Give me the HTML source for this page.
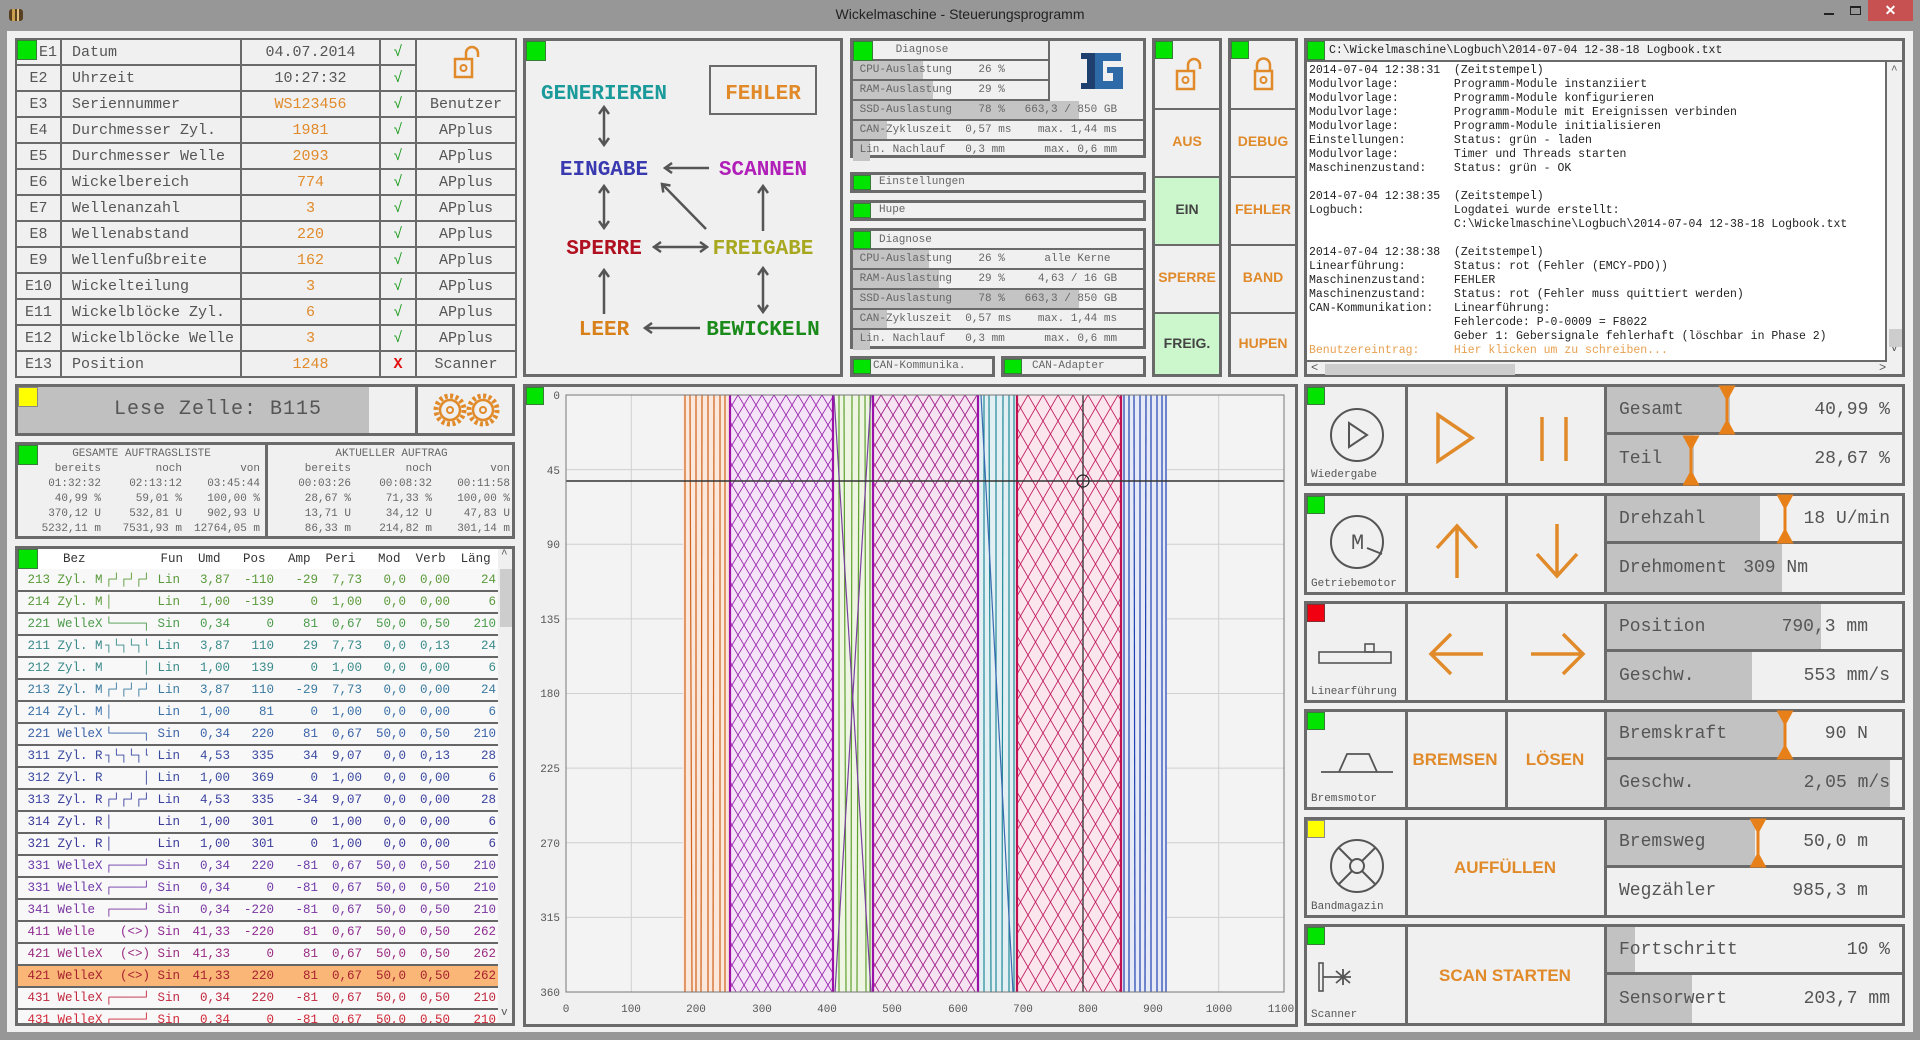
<!DOCTYPE html>
<html><head><meta charset="utf-8"><style>
*{box-sizing:border-box}
body{margin:0;width:1920px;height:1040px;overflow:hidden;background:#979797;font-family:"Liberation Mono",monospace;color:#555}
.a{position:absolute}
#win{position:absolute;left:7px;top:31px;width:1906px;height:1001px;background:#f0f0f0}
.bx{position:absolute;border:3px solid #6a6a6a}
.g{position:absolute;width:20px;height:20px;background:#00e400;border:1px solid #3a7a3a}
table{border-collapse:collapse;table-layout:fixed}
#et td{border:2px solid #6a6a6a;height:26px;padding:0;font-size:15px;white-space:nowrap;overflow:hidden}
.or{color:#e08a2a}
.btn{font-family:"Liberation Sans",sans-serif;font-weight:bold;color:#e08a2a;text-align:center}
.dg{position:absolute;left:0;height:20px;border-bottom:2px solid #6a6a6a;font-size:11px;line-height:18px;white-space:pre;color:#666;overflow:hidden}
.dg i{position:absolute;left:0;top:0;bottom:0;background:#c4c4c4}
.dg span{position:relative}
#log div{height:14px;line-height:14px;white-space:pre;font-size:11.5px;color:#222}
#lst td{font-size:12.5px;height:22px;border-bottom:2px solid #666;padding:0 2px;white-space:pre;text-align:right;overflow:hidden}
#lst td.l{text-align:left}
.rp{position:absolute;left:1304px;width:601px;border:3px solid #6a6a6a;background:#f0f0f0}
.rc{position:absolute;top:0;bottom:0;border-right:3px solid #6a6a6a}
.rv{position:absolute;left:300px;right:0;height:50%;font-size:18px;color:#555;overflow:hidden}
.rv i{position:absolute;left:0;top:0;bottom:0;background:#c2c2c2}
.rv b{position:absolute;left:12px;font-weight:normal;top:50%;transform:translateY(-50%)}
.rv u{position:absolute;text-decoration:none;top:50%;transform:translateY(-50%)}
.lab{position:absolute;left:4px;bottom:2px;font-size:11px;color:#555}
.ck{text-align:center;color:#1a9a1a}
</style></head><body>
<svg class="a" style="left:6px;top:6px" width="20" height="18"><rect x="3" y="3" width="14" height="12" rx="3" fill="#5a4020"/><rect x="6" y="3" width="3" height="12" fill="#c8a050"/><rect x="11" y="3" width="2" height="12" fill="#e0c080"/></svg>
<div class="a" style="left:0;width:1920px;top:6px;text-align:center;font-family:'Liberation Sans',sans-serif;font-size:14px;color:#222">Wickelmaschine - Steuerungsprogramm</div>
<div class="a" style="left:1824px;top:13px;width:10px;height:2px;background:#222"></div>
<div class="a" style="left:1850px;top:6px;width:11px;height:9px;border:1px solid #222;border-top-width:2px"></div>
<div class="a" style="left:1868px;top:0;width:45px;height:21px;background:#c75050;color:#fff;text-align:center;font:bold 14px 'Liberation Sans',sans-serif;line-height:21px">✕</div>
<div id="win"></div>

<table id="et" class="a" style="left:15px;top:38px;width:500px">
<colgroup><col style="width:45px"><col style="width:180px"><col style="width:139px"><col style="width:36px"><col style="width:100px"></colgroup>
<tr><td style="text-align:right;padding-right:3px;position:relative"><div class="g" style="left:0;top:0"></div>E1</td><td style="padding-left:10px">Datum</td><td style="text-align:center">04.07.2014</td><td class="ck">√</td><td rowspan="2" style="text-align:center"><svg width="30" height="40" viewBox="0 0 30 40"><path d="M15 16 V10 a6 6 0 0 1 12 0 v4" fill="none" stroke="#e08a2a" stroke-width="2.5"/><rect x="4" y="16" width="17" height="18" fill="none" stroke="#e08a2a" stroke-width="2.5"/><circle cx="12.5" cy="25" r="3" fill="none" stroke="#e08a2a" stroke-width="2"/></svg></td></tr>
<tr><td style="text-align:center">E2</td><td style="padding-left:10px">Uhrzeit</td><td style="text-align:center">10:27:32</td><td class="ck">√</td></tr>
<tr><td style="text-align:center">E3</td><td style="padding-left:10px">Seriennummer</td><td style="text-align:center" class="or">WS123456</td><td class="ck">√</td><td style="text-align:center">Benutzer</td></tr>
<tr><td style="text-align:center">E4</td><td style="padding-left:10px">Durchmesser Zyl.</td><td style="text-align:center" class="or">1981</td><td class="ck">√</td><td style="text-align:center">APplus</td></tr>
<tr><td style="text-align:center">E5</td><td style="padding-left:10px">Durchmesser Welle</td><td style="text-align:center" class="or">2093</td><td class="ck">√</td><td style="text-align:center">APplus</td></tr>
<tr><td style="text-align:center">E6</td><td style="padding-left:10px">Wickelbereich</td><td style="text-align:center" class="or">774</td><td class="ck">√</td><td style="text-align:center">APplus</td></tr>
<tr><td style="text-align:center">E7</td><td style="padding-left:10px">Wellenanzahl</td><td style="text-align:center" class="or">3</td><td class="ck">√</td><td style="text-align:center">APplus</td></tr>
<tr><td style="text-align:center">E8</td><td style="padding-left:10px">Wellenabstand</td><td style="text-align:center" class="or">220</td><td class="ck">√</td><td style="text-align:center">APplus</td></tr>
<tr><td style="text-align:center">E9</td><td style="padding-left:10px">Wellenfußbreite</td><td style="text-align:center" class="or">162</td><td class="ck">√</td><td style="text-align:center">APplus</td></tr>
<tr><td style="text-align:center">E10</td><td style="padding-left:10px">Wickelteilung</td><td style="text-align:center" class="or">3</td><td class="ck">√</td><td style="text-align:center">APplus</td></tr>
<tr><td style="text-align:center">E11</td><td style="padding-left:10px">Wickelblöcke Zyl.</td><td style="text-align:center" class="or">6</td><td class="ck">√</td><td style="text-align:center">APplus</td></tr>
<tr><td style="text-align:center">E12</td><td style="padding-left:10px">Wickelblöcke Welle</td><td style="text-align:center" class="or">3</td><td class="ck">√</td><td style="text-align:center">APplus</td></tr>
<tr><td style="text-align:center">E13</td><td style="padding-left:10px">Position</td><td style="text-align:center" class="or">1248</td><td style="text-align:center;color:#e01010;font-weight:bold">X</td><td style="text-align:center">Scanner</td></tr>
</table>

<div class="bx" style="left:15px;top:384px;width:500px;height:52px">
 <div class="a" style="left:0;top:0;width:351px;height:46px;background:#c0c0c0"></div>
 <div class="a" style="left:0;top:0;width:20px;height:20px;background:#ffff00;border:1px solid #888"></div>
 <div class="a" style="left:0;width:400px;top:11px;text-align:center;font-size:20px;letter-spacing:1px;color:#555">Lese Zelle: B115</div>
 <div class="a" style="left:397px;top:0;width:3px;height:46px;background:#6a6a6a"></div>
 <svg class="a" style="left:412px;top:3px" width="80" height="40"><g fill="none" stroke="#e08a2a"><circle cx="20" cy="20" r="14" stroke-width="5" stroke-dasharray="3 2.5"/><circle cx="20" cy="20" r="10" stroke-width="2.5"/><circle cx="20" cy="20" r="3" stroke-width="2"/><circle cx="53" cy="20" r="14" stroke-width="5" stroke-dasharray="3 2.5"/><circle cx="53" cy="20" r="10" stroke-width="2.5"/><circle cx="53" cy="20" r="3" stroke-width="2"/></g></svg>
</div>

<div class="bx" style="left:15px;top:442px;width:500px;height:97px;font-size:11px;color:#666;line-height:15px">
 <div class="g" style="left:0;top:0"></div>
 <div class="a" style="left:247px;top:0;width:3px;height:91px;background:#6a6a6a"></div>
 <div class="a" style="left:0;top:2px;width:247px;text-align:center">GESAMTE AUFTRAGSLISTE</div>
 <div class="a" style="left:250px;top:2px;width:247px;text-align:center">AKTUELLER AUFTRAG</div>
 <div class="a" style="left:8px;top:17px;width:75px;text-align:right;white-space:pre">bereits
01:32:32
40,99 %
370,12 U
5232,11 m</div>
 <div class="a" style="left:86px;top:17px;width:78px;text-align:right;white-space:pre">noch
02:13:12
59,01 %
532,81 U
7531,93 m</div>
 <div class="a" style="left:166px;top:17px;width:76px;text-align:right;white-space:pre">von
03:45:44
100,00 %
902,93 U
12764,05 m</div>
 <div class="a" style="left:258px;top:17px;width:75px;text-align:right;white-space:pre">bereits
00:03:26
28,67 %
13,71 U
86,33 m</div>
 <div class="a" style="left:336px;top:17px;width:78px;text-align:right;white-space:pre">noch
00:08:32
71,33 %
34,12 U
214,82 m</div>
 <div class="a" style="left:416px;top:17px;width:76px;text-align:right;white-space:pre">von
00:11:58
100,00 %
47,83 U
301,14 m</div>
</div>

<div class="bx" style="left:15px;top:546px;width:500px;height:480px;overflow:hidden;background:#f8f8f8">
 <div class="a" style="left:0;top:0;width:480px;height:20px;background:#fff;font-size:12.5px;color:#333;line-height:20px;white-space:pre">      Bez          Fun  Umd   Pos   Amp  Peri   Mod  Verb  Läng</div>
 <div class="g" style="left:0;top:0"></div>
 <div class="a" style="left:480px;top:0;width:17px;height:474px;background:#f0f0f0"></div>
 <div class="a" style="left:483px;top:0;font-size:11px;color:#555">^</div>
 <div class="a" style="left:483px;top:458px;font-size:11px;color:#555">v</div>
 <div class="a" style="left:482px;top:20px;width:13px;height:58px;background:#cdcdcd"></div>
 <table id="lst" class="a" style="left:0;top:20px;width:480px">
 <colgroup><col style="width:85px"><col style="width:45px"><col style="width:42px"><col style="width:42px"><col style="width:44px"><col style="width:44px"><col style="width:44px"><col style="width:44px"><col style="width:44px"><col style="width:46px"></colgroup>
 <tr style="color:#5a9a3a"><td class="l"> 213 Zyl. M</td><td class="l">┌┘┌┘┌┘</td><td class="l"> Lin</td><td>3,87</td><td>-110</td><td>-29</td><td>7,73</td><td>0,0</td><td>0,00</td><td>24</td></tr>
 <tr style="color:#5a9a3a"><td class="l"> 214 Zyl. M</td><td class="l">│</td><td class="l"> Lin</td><td>1,00</td><td>-139</td><td>0</td><td>1,00</td><td>0,0</td><td>0,00</td><td>6</td></tr>
 <tr style="color:#4a9a4a"><td class="l"> 221 WelleX</td><td class="l">└────┐</td><td class="l"> Sin</td><td>0,34</td><td>0</td><td>81</td><td>0,67</td><td>50,0</td><td>0,50</td><td>210</td></tr>
 <tr style="color:#3a8a8a"><td class="l"> 211 Zyl. M</td><td class="l">┐└┐└┐└</td><td class="l"> Lin</td><td>3,87</td><td>110</td><td>29</td><td>7,73</td><td>0,0</td><td>0,13</td><td>24</td></tr>
 <tr style="color:#3a8a8a"><td class="l"> 212 Zyl. M</td><td class="l">     │</td><td class="l"> Lin</td><td>1,00</td><td>139</td><td>0</td><td>1,00</td><td>0,0</td><td>0,00</td><td>6</td></tr>
 <tr style="color:#3a7aa0"><td class="l"> 213 Zyl. M</td><td class="l">┌┘┌┘┌┘</td><td class="l"> Lin</td><td>3,87</td><td>110</td><td>-29</td><td>7,73</td><td>0,0</td><td>0,00</td><td>24</td></tr>
 <tr style="color:#3a70a8"><td class="l"> 214 Zyl. M</td><td class="l">│</td><td class="l"> Lin</td><td>1,00</td><td>81</td><td>0</td><td>1,00</td><td>0,0</td><td>0,00</td><td>6</td></tr>
 <tr style="color:#3a62a8"><td class="l"> 221 WelleX</td><td class="l">└────┐</td><td class="l"> Sin</td><td>0,34</td><td>220</td><td>81</td><td>0,67</td><td>50,0</td><td>0,50</td><td>210</td></tr>
 <tr style="color:#3a4aa0"><td class="l"> 311 Zyl. R</td><td class="l">┐└┐└┐└</td><td class="l"> Lin</td><td>4,53</td><td>335</td><td>34</td><td>9,07</td><td>0,0</td><td>0,13</td><td>28</td></tr>
 <tr style="color:#3a4aa0"><td class="l"> 312 Zyl. R</td><td class="l">     │</td><td class="l"> Lin</td><td>1,00</td><td>369</td><td>0</td><td>1,00</td><td>0,0</td><td>0,00</td><td>6</td></tr>
 <tr style="color:#3a40a0"><td class="l"> 313 Zyl. R</td><td class="l">┌┘┌┘┌┘</td><td class="l"> Lin</td><td>4,53</td><td>335</td><td>-34</td><td>9,07</td><td>0,0</td><td>0,00</td><td>28</td></tr>
 <tr style="color:#3a3a9a"><td class="l"> 314 Zyl. R</td><td class="l">│</td><td class="l"> Lin</td><td>1,00</td><td>301</td><td>0</td><td>1,00</td><td>0,0</td><td>0,00</td><td>6</td></tr>
 <tr style="color:#3a3a9a"><td class="l"> 321 Zyl. R</td><td class="l">│</td><td class="l"> Lin</td><td>1,00</td><td>301</td><td>0</td><td>1,00</td><td>0,0</td><td>0,00</td><td>6</td></tr>
 <tr style="color:#6a3aa8"><td class="l"> 331 WelleX</td><td class="l">┌────┘</td><td class="l"> Sin</td><td>0,34</td><td>220</td><td>-81</td><td>0,67</td><td>50,0</td><td>0,50</td><td>210</td></tr>
 <tr style="color:#7038a8"><td class="l"> 331 WelleX</td><td class="l">┌────┘</td><td class="l"> Sin</td><td>0,34</td><td>0</td><td>-81</td><td>0,67</td><td>50,0</td><td>0,50</td><td>210</td></tr>
 <tr style="color:#7a35a0"><td class="l"> 341 Welle</td><td class="l">┌────┘</td><td class="l"> Sin</td><td>0,34</td><td>-220</td><td>-81</td><td>0,67</td><td>50,0</td><td>0,50</td><td>210</td></tr>
 <tr style="color:#902a90"><td class="l"> 411 Welle</td><td class="l">  (&lt;&gt;)</td><td class="l"> Sin</td><td>41,33</td><td>-220</td><td>81</td><td>0,67</td><td>50,0</td><td>0,50</td><td>262</td></tr>
 <tr style="color:#9a2a80"><td class="l"> 421 WelleX</td><td class="l">  (&lt;&gt;)</td><td class="l"> Sin</td><td>41,33</td><td>0</td><td>81</td><td>0,67</td><td>50,0</td><td>0,50</td><td>262</td></tr>
 <tr style="color:#a82030;background:#f9b676"><td class="l"> 421 WelleX</td><td class="l">  (&lt;&gt;)</td><td class="l"> Sin</td><td>41,33</td><td>220</td><td>81</td><td>0,67</td><td>50,0</td><td>0,50</td><td>262</td></tr>
 <tr style="color:#c02840"><td class="l"> 431 WelleX</td><td class="l">┌────┘</td><td class="l"> Sin</td><td>0,34</td><td>220</td><td>-81</td><td>0,67</td><td>50,0</td><td>0,50</td><td>210</td></tr>
 <tr style="color:#d02838"><td class="l"> 431 WelleX</td><td class="l">┌────┘</td><td class="l"> Sin</td><td>0,34</td><td>0</td><td>-81</td><td>0,67</td><td>50,0</td><td>0,50</td><td>210</td></tr>
 </table>
</div>

<div class="bx" style="left:523px;top:38px;width:320px;height:339px">
 <div class="g" style="left:0;top:0"></div>
 <div class="a" style="left:183px;top:24px;width:108px;height:50px;border:2px solid #6a6a6a"></div>
 <svg class="a" style="left:0;top:0" width="314" height="333">
 <defs><marker id="ar" markerWidth="10" markerHeight="12" refX="8" refY="6" orient="auto-start-reverse" markerUnits="userSpaceOnUse"><path d="M1 1 L8 6 L1 11" fill="none" stroke="#555" stroke-width="2.5"/></marker></defs>
 <g stroke="#555" stroke-width="2.5" fill="none" marker-end="url(#ar)">
 <line x1="78" y1="66" x2="78" y2="104" marker-start="url(#ar)"/>
 <line x1="78" y1="145" x2="78" y2="187" marker-start="url(#ar)"/>
 <line x1="78" y1="273" x2="78" y2="229"/>
 <line x1="237" y1="190" x2="237" y2="145"/>
 <line x1="237" y1="227" x2="237" y2="271" marker-start="url(#ar)"/>
 <line x1="183" y1="127" x2="139" y2="127"/>
 <line x1="128" y1="206" x2="181" y2="206" marker-start="url(#ar)"/>
 <line x1="174" y1="287" x2="119" y2="287"/>
 <line x1="180" y1="188" x2="136" y2="143"/>
 </g>
 <g font-family="Liberation Mono,monospace" font-weight="bold" font-size="21" text-anchor="middle">
 <text x="78" y="58" fill="#1a9a9a">GENERIEREN</text>
 <text x="237" y="58" fill="#e08a2a">FEHLER</text>
 <text x="78" y="134" fill="#3a3ab0">EINGABE</text>
 <text x="237" y="134" fill="#b020b8">SCANNEN</text>
 <text x="78" y="213" fill="#b01020">SPERRE</text>
 <text x="237" y="213" fill="#a8a820">FREIGABE</text>
 <text x="78" y="294" fill="#d8801a">LEER</text>
 <text x="237" y="294" fill="#1a8a1a">BEWICKELN</text>
 </g></svg>
</div>

<div class="bx" style="left:850px;top:38px;width:296px;height:120px">
 <div class="dg" style="top:0;width:197px;border-right:2px solid #6a6a6a"><span style="left:36px"> Diagnose</span></div>
 <div class="g" style="left:0;top:0"></div>
 <div class="dg" style="top:20px;width:197px;border-right:2px solid #6a6a6a"><i style="width:70px"></i><span> CPU-Auslastung    26 %</span></div>
 <div class="dg" style="top:40px;width:197px;border-right:2px solid #6a6a6a"><i style="width:80px"></i><span> RAM-Auslastung    29 %</span></div>
 <div class="dg" style="top:60px;width:290px"><i style="width:226px"></i><span> SSD-Auslastung    78 %   663,3 / 850 GB</span></div>
 <div class="dg" style="top:80px;width:290px"><i style="width:34px"></i><span> CAN-Zykluszeit  0,57 ms    max. 1,44 ms</span></div>
 <div class="dg" style="top:100px;width:290px;border-bottom:0"><i style="width:17px"></i><span> Lin. Nachlauf   0,3 mm      max. 0,6 mm</span></div>
 <svg class="a" style="left:228px;top:10px" width="44" height="40"><polygon points="0,2 14,2 14,38 0,38 0,32 6,32 6,8 0,8" fill="#1f3f6f"/><polygon points="14,2 40,2 40,10 22,10 22,30 32,30 32,22 26,22 26,16 42,16 42,38 14,38" fill="#2f6aa8"/></svg>
</div>
<div class="bx" style="left:850px;top:172px;width:296px;height:21px"><div class="dg" style="top:0;width:290px;border:0;line-height:15px"><span style="left:26px">Einstellungen</span></div><div class="g" style="left:0;top:0;height:15px;width:18px"></div></div>
<div class="bx" style="left:850px;top:200px;width:296px;height:21px"><div class="dg" style="top:0;width:290px;border:0;line-height:15px"><span style="left:26px">Hupe</span></div><div class="g" style="left:0;top:0;height:15px;width:18px"></div></div>
<div class="bx" style="left:850px;top:228px;width:296px;height:121px">
 <div class="dg" style="top:0;width:290px;height:19px"><span style="left:26px">Diagnose</span></div>
 <div class="g" style="left:0;top:0;width:18px;height:18px"></div>
 <div class="dg" style="top:19px;width:290px"><i style="width:76px"></i><span> CPU-Auslastung    26 %      alle Kerne</span></div>
 <div class="dg" style="top:39px;width:290px"><i style="width:86px"></i><span> RAM-Auslastung    29 %     4,63 / 16 GB</span></div>
 <div class="dg" style="top:59px;width:290px"><i style="width:226px"></i><span> SSD-Auslastung    78 %   663,3 / 850 GB</span></div>
 <div class="dg" style="top:79px;width:290px"><i style="width:34px"></i><span> CAN-Zykluszeit  0,57 ms    max. 1,44 ms</span></div>
 <div class="dg" style="top:99px;width:290px;border-bottom:0"><i style="width:17px"></i><span> Lin. Nachlauf   0,3 mm      max. 0,6 mm</span></div>
</div>
<div class="bx" style="left:850px;top:356px;width:145px;height:21px"><div class="dg" style="top:0;width:140px;border:0;line-height:15px"><span style="left:20px">CAN-Kommunika.</span></div><div class="g" style="left:0;top:0;height:15px;width:18px"></div></div>
<div class="bx" style="left:1001px;top:356px;width:145px;height:21px"><div class="dg" style="top:0;width:140px;border:0;line-height:15px"><span style="left:28px">CAN-Adapter</span></div><div class="g" style="left:0;top:0;height:15px;width:18px"></div></div>

<div class="bx" style="left:1152px;top:38px;width:70px;height:339px">
 <div class="a" style="left:0;top:67px;width:64px;height:68px;border-top:2px solid #6a6a6a"></div>
 <div class="a" style="left:0;top:135px;width:64px;height:68px;border-top:2px solid #6a6a6a;background:#ccf7cc"></div>
 <div class="a" style="left:0;top:203px;width:64px;height:68px;border-top:2px solid #6a6a6a"></div>
 <div class="a" style="left:0;top:271px;width:64px;height:62px;border-top:2px solid #6a6a6a;background:#ccf7cc"></div>
 <div class="g" style="left:0;top:0;width:18px;height:18px"></div>
 <svg class="a" style="left:18px;top:14px" width="30" height="40" viewBox="0 0 30 40"><path d="M15 16 V10 a6 6 0 0 1 12 0 v4" fill="none" stroke="#e08a2a" stroke-width="2.5"/><rect x="4" y="16" width="17" height="18" fill="none" stroke="#e08a2a" stroke-width="2.5"/><circle cx="12.5" cy="25" r="3" fill="none" stroke="#e08a2a" stroke-width="2"/></svg>
 <div class="a btn" style="left:0;width:64px;top:92px;font-size:14px">AUS</div>
 <div class="a btn" style="left:0;width:64px;top:160px;font-size:14px;color:#444">EIN</div>
 <div class="a btn" style="left:0;width:64px;top:228px;font-size:14px">SPERRE</div>
 <div class="a btn" style="left:0;width:64px;top:294px;font-size:14px;color:#444">FREIG.</div>
</div>
<div class="bx" style="left:1228px;top:38px;width:70px;height:339px">
 <div class="a" style="left:0;top:67px;width:64px;height:68px;border-top:2px solid #6a6a6a"></div>
 <div class="a" style="left:0;top:135px;width:64px;height:68px;border-top:2px solid #6a6a6a"></div>
 <div class="a" style="left:0;top:203px;width:64px;height:68px;border-top:2px solid #6a6a6a"></div>
 <div class="a" style="left:0;top:271px;width:64px;height:62px;border-top:2px solid #6a6a6a"></div>
 <div class="g" style="left:0;top:0;width:18px;height:18px"></div>
 <svg class="a" style="left:20px;top:14px" width="30" height="40" viewBox="0 0 30 40"><path d="M6 16 V10 a6.5 6.5 0 0 1 13 0 v6" fill="none" stroke="#e08a2a" stroke-width="2.5"/><rect x="4" y="16" width="17" height="18" fill="none" stroke="#e08a2a" stroke-width="2.5"/><circle cx="12.5" cy="25" r="3" fill="none" stroke="#e08a2a" stroke-width="2"/></svg>
 <div class="a btn" style="left:0;width:64px;top:92px;font-size:14px">DEBUG</div>
 <div class="a btn" style="left:0;width:64px;top:160px;font-size:14px">FEHLER</div>
 <div class="a btn" style="left:0;width:64px;top:228px;font-size:14px">BAND</div>
 <div class="a btn" style="left:0;width:64px;top:294px;font-size:14px">HUPEN</div>
</div>

<div class="bx" style="left:1304px;top:38px;width:601px;height:339px;background:#f0f0f0">
 <div class="a" style="left:0;top:0;width:595px;height:21px;border-bottom:2px solid #6a6a6a;font-size:11.5px;color:#222;line-height:19px;padding-left:22px;white-space:pre">C:\Wickelmaschine\Logbuch\2014-07-04 12-38-18 Logbook.txt</div>
 <div class="g" style="left:0;top:0;width:18px;height:19px"></div>
 <div id="log" class="a" style="left:0;top:21px;width:580px;height:300px;background:#fff;border-right:2px solid #6a6a6a;border-bottom:2px solid #6a6a6a;padding:2px 0 0 2px;overflow:hidden">
<div>2014-07-04 12:38:31  (Zeitstempel)</div>
<div>Modulvorlage:        Programm-Module instanziiert</div>
<div>Modulvorlage:        Programm-Module konfigurieren</div>
<div>Modulvorlage:        Programm-Module mit Ereignissen verbinden</div>
<div>Modulvorlage:        Programm-Module initialisieren</div>
<div>Einstellungen:       Status: grün - laden</div>
<div>Modulvorlage:        Timer und Threads starten</div>
<div>Maschinenzustand:    Status: grün - OK</div>
<div> </div>
<div>2014-07-04 12:38:35  (Zeitstempel)</div>
<div>Logbuch:             Logdatei wurde erstellt:</div>
<div>                     C:\Wickelmaschine\Logbuch\2014-07-04 12-38-18 Logbook.txt</div>
<div> </div>
<div>2014-07-04 12:38:38  (Zeitstempel)</div>
<div>Linearführung:       Status: rot (Fehler (EMCY-PDO))</div>
<div>Maschinenzustand:    FEHLER</div>
<div>Maschinenzustand:    Status: rot (Fehler muss quittiert werden)</div>
<div>CAN-Kommunikation:   Linearführung:</div>
<div>                     Fehlercode: P-0-0009 = F8022</div>
<div>                     Geber 1: Gebersignale fehlerhaft (löschbar in Phase 2)</div>
<div style="color:#e8a050">Benutzereintrag:     Hier klicken um zu schreiben...</div>
 </div>
 <div class="a" style="left:584px;top:24px;font-size:11px;color:#555">^</div>
 <div class="a" style="left:584px;top:302px;font-size:11px;color:#555">v</div>
 <div class="a" style="left:582px;top:288px;width:13px;height:18px;background:#cdcdcd"></div>
 <div class="a" style="left:18px;top:323px;width:190px;height:11px;background:#cdcdcd"></div>
 <div class="a" style="left:4px;top:320px;font-size:12px;color:#555">&lt;</div>
 <div class="a" style="left:572px;top:320px;font-size:12px;color:#555">&gt;</div>
</div>

<div class="bx" style="left:523px;top:384px;width:775px;height:643px;background:#f0f0f0">
<svg class="a" style="left:0;top:0" width="769" height="637" font-family="Liberation Mono,monospace" font-size="11" fill="#555">
<defs>
<pattern id="pp" patternUnits="userSpaceOnUse" x="200" y="8" width="12" height="20"><path d="M0 0 L12 20 M12 0 L0 20" stroke="#9a2ab0" stroke-width="0.9" fill="none"/></pattern>
<pattern id="pm" patternUnits="userSpaceOnUse" x="343" y="8" width="12" height="20"><path d="M0 0 L12 20 M12 0 L0 20" stroke="#a0208a" stroke-width="0.9" fill="none"/></pattern>
<pattern id="pc" patternUnits="userSpaceOnUse" x="487" y="8" width="15" height="26"><path d="M0 0 Q7.5 13 15 26 M15 0 Q7.5 13 0 26" stroke="#c02060" stroke-width="0.9" fill="none"/></pattern>
</defs>
<rect x="40" y="8" width="718" height="597" fill="#f3f3f3" stroke="#888"/>
<g stroke="#d0d0d0" stroke-width="1">
<line x1="105.3" y1="8" x2="105.3" y2="605"/><line x1="170.5" y1="8" x2="170.5" y2="605"/><line x1="235.8" y1="8" x2="235.8" y2="605"/><line x1="301.1" y1="8" x2="301.1" y2="605"/><line x1="366.4" y1="8" x2="366.4" y2="605"/><line x1="431.6" y1="8" x2="431.6" y2="605"/><line x1="496.9" y1="8" x2="496.9" y2="605"/><line x1="562.2" y1="8" x2="562.2" y2="605"/><line x1="627.4" y1="8" x2="627.4" y2="605"/><line x1="692.7" y1="8" x2="692.7" y2="605"/>
<line x1="40" y1="82.6" x2="758" y2="82.6"/><line x1="40" y1="157.3" x2="758" y2="157.3"/><line x1="40" y1="231.9" x2="758" y2="231.9"/><line x1="40" y1="306.5" x2="758" y2="306.5"/><line x1="40" y1="381.1" x2="758" y2="381.1"/><line x1="40" y1="455.8" x2="758" y2="455.8"/><line x1="40" y1="530.4" x2="758" y2="530.4"/>
</g>
<rect x="157" y="8" width="46" height="597" fill="#fbe8dc"/>
<rect x="203" y="8" width="105" height="597" fill="#f5e4f7"/><rect x="203" y="8" width="105" height="597" fill="url(#pp)"/>
<rect x="308" y="8" width="38" height="597" fill="#eef5e2"/>
<rect x="346" y="8" width="107" height="597" fill="#f7e4f2"/><rect x="346" y="8" width="107" height="597" fill="url(#pm)"/>
<rect x="453" y="8" width="37" height="597" fill="#e2f0f4"/>
<rect x="490" y="8" width="106" height="597" fill="#fbe6ee"/><rect x="490" y="8" width="106" height="597" fill="url(#pc)"/>
<rect x="596" y="8" width="45" height="597" fill="#e6eaf7"/>
<g stroke-width="1.2">
<g stroke="#d0601a"><line x1="159" y1="8" x2="159" y2="605"/><line x1="164" y1="8" x2="166" y2="605"/><line x1="170" y1="8" x2="170" y2="605"/><line x1="176" y1="8" x2="175" y2="605"/><line x1="182" y1="8" x2="182" y2="605"/><line x1="188" y1="8" x2="187" y2="605"/><line x1="194" y1="8" x2="194" y2="605"/><line x1="199" y1="8" x2="199" y2="605"/></g>
<g stroke="#9a10a8" stroke-width="2.2"><line x1="204" y1="8" x2="204" y2="605"/><line x1="307" y1="8" x2="307" y2="605"/><line x1="347" y1="8" x2="347" y2="605"/><line x1="452" y1="8" x2="452" y2="605"/></g>
<g stroke="#60a030"><line x1="313" y1="8" x2="313" y2="605"/><line x1="318" y1="8" x2="320" y2="605"/><line x1="326" y1="8" x2="325" y2="605"/><line x1="333" y1="8" x2="331" y2="605"/><line x1="339" y1="8" x2="340" y2="605"/><line x1="344" y1="8" x2="344" y2="605"/><line x1="308" y1="8" x2="345" y2="605" stroke="#7a40a0"/><line x1="345" y1="8" x2="309" y2="605" stroke="#7a40a0"/></g>
<g stroke="#208898"><line x1="458" y1="8" x2="458" y2="605"/><line x1="463" y1="8" x2="465" y2="605"/><line x1="470" y1="8" x2="470" y2="605"/><line x1="477" y1="8" x2="476" y2="605"/><line x1="483" y1="8" x2="483" y2="605"/><line x1="488" y1="8" x2="488" y2="605"/><line x1="455" y1="8" x2="487" y2="605" stroke="#3a6ab0"/></g>
<g stroke="#c01050" stroke-width="2.2"><line x1="491" y1="8" x2="491" y2="605"/><line x1="595" y1="8" x2="595" y2="605"/></g>
<g stroke="#2040b0"><line x1="598" y1="8" x2="598" y2="605"/><line x1="603" y1="8" x2="603" y2="605"/><line x1="608" y1="8" x2="609" y2="605"/><line x1="614" y1="8" x2="614" y2="605"/><line x1="620" y1="8" x2="619" y2="605"/><line x1="625" y1="8" x2="625" y2="605"/><line x1="631" y1="8" x2="631" y2="605"/><line x1="636" y1="8" x2="636" y2="605"/><line x1="640" y1="8" x2="640" y2="605"/></g>
</g>
<line x1="40" y1="94" x2="758" y2="94" stroke="#333" stroke-width="1.5"/>
<line x1="557" y1="8" x2="557" y2="605" stroke="#333" stroke-width="1.3"/>
<circle cx="557" cy="94" r="6" fill="none" stroke="#222" stroke-width="1.2"/>
<rect x="40" y="8" width="718" height="597" fill="none" stroke="#777"/>
<g text-anchor="end"><text x="34" y="12">0</text><text x="34" y="87">45</text><text x="34" y="161">90</text><text x="34" y="236">135</text><text x="34" y="310">180</text><text x="34" y="385">225</text><text x="34" y="460">270</text><text x="34" y="534">315</text><text x="34" y="609">360</text></g>
<g text-anchor="middle"><text x="40" y="625">0</text><text x="105" y="625">100</text><text x="170" y="625">200</text><text x="236" y="625">300</text><text x="301" y="625">400</text><text x="366" y="625">500</text><text x="432" y="625">600</text><text x="497" y="625">700</text><text x="562" y="625">800</text><text x="627" y="625">900</text><text x="693" y="625">1000</text><text x="755" y="625">1100</text></g>
</svg>
<div class="g" style="left:0;top:0;width:18px;height:18px"></div>
</div>

<div class="rp" style="top:384px;height:102px">
 <div class="rc" style="left:98px"></div><div class="rc" style="left:198px"></div><div class="rc" style="left:297px"></div>
 <div class="g" style="left:0;top:0;width:18px;height:18px"></div>
 <svg class="a" style="left:22px;top:20px" width="56" height="56"><circle cx="28" cy="28" r="26" fill="none" stroke="#555" stroke-width="2"/><path d="M20 16 L38 28 L20 40 Z" fill="none" stroke="#555" stroke-width="2"/></svg>
 <div class="lab">Wiedergabe</div>
 <svg class="a" style="left:127px;top:24px" width="44" height="56"><path d="M4 4 L38 27 L4 50 Z" fill="none" stroke="#e08a2a" stroke-width="3.5"/></svg>
 <svg class="a" style="left:228px;top:28px" width="40" height="50"><path d="M7 2 V46 M31 2 V46" stroke="#e08a2a" stroke-width="3.5"/></svg>
 <div class="rv" style="top:0;border-bottom:3px solid #6a6a6a"><i style="width:123px"></i><b>Gesamt</b><u style="right:12px">40,99 %</u></div>
 <div class="rv" style="top:50%"><i style="width:87px"></i><b>Teil</b><u style="right:12px">28,67 %</u></div>
</div>
<div class="rp" style="top:493px;height:102px">
 <div class="rc" style="left:98px"></div><div class="rc" style="left:198px"></div><div class="rc" style="left:297px"></div>
 <div class="g" style="left:0;top:0;width:18px;height:18px"></div>
 <svg class="a" style="left:22px;top:18px" width="58" height="58"><circle cx="28" cy="28" r="26" fill="none" stroke="#555" stroke-width="2"/><text x="22" y="35" font-family="Liberation Mono,monospace" font-size="22" fill="#555">M</text><path d="M38 34 L53 40" stroke="#555" stroke-width="2"/></svg>
 <div class="lab">Getriebemotor</div>
 <svg class="a" style="left:126px;top:26px" width="48" height="60"><path d="M24 56 V4 M4 26 L24 4 L44 26" fill="none" stroke="#e08a2a" stroke-width="3.5"/></svg>
 <svg class="a" style="left:226px;top:26px" width="48" height="60"><path d="M24 2 V54 M4 32 L24 54 L44 32" fill="none" stroke="#e08a2a" stroke-width="3.5"/></svg>
 <div class="rv" style="top:0;border-bottom:3px solid #6a6a6a"><i style="width:153px"></i><b>Drehzahl</b><u style="right:12px">18 U/min</u></div>
 <div class="rv" style="top:50%"><i style="width:175px"></i><b>Drehmoment</b><u style="right:94px">309 Nm</u></div>
</div>
<div class="rp" style="top:601px;height:102px">
 <div class="rc" style="left:98px"></div><div class="rc" style="left:198px"></div><div class="rc" style="left:297px"></div>
 <div class="g" style="left:0;top:0;width:18px;height:18px;background:#f00010;border-color:#803030"></div>
 <svg class="a" style="left:10px;top:38px" width="80" height="24"><rect x="2" y="10" width="72" height="11" fill="none" stroke="#555" stroke-width="1.6"/><rect x="48" y="2" width="9" height="8" fill="none" stroke="#555" stroke-width="1.6"/></svg>
 <div class="lab">Linearführung</div>
 <svg class="a" style="left:120px;top:26px" width="60" height="50"><path d="M56 24 H4 M24 4 L4 24 L24 44" fill="none" stroke="#e08a2a" stroke-width="3.5"/></svg>
 <svg class="a" style="left:220px;top:26px" width="60" height="50"><path d="M4 24 H56 M36 4 L56 24 L36 44" fill="none" stroke="#e08a2a" stroke-width="3.5"/></svg>
 <div class="rv" style="top:0;border-bottom:3px solid #6a6a6a"><i style="width:214px"></i><b>Position</b><u style="right:34px">790,3 mm</u></div>
 <div class="rv" style="top:50%"><i style="width:145px"></i><b>Geschw.</b><u style="right:12px">553 mm/s</u></div>
</div>
<div class="rp" style="top:709px;height:101px">
 <div class="rc" style="left:98px"></div><div class="rc" style="left:198px"></div><div class="rc" style="left:297px"></div>
 <div class="g" style="left:0;top:0;width:18px;height:18px"></div>
 <svg class="a" style="left:10px;top:36px" width="80" height="30"><path d="M4 24 H76 M22 24 L30 6 H52 L60 24" fill="none" stroke="#555" stroke-width="1.8"/></svg>
 <div class="lab">Bremsmotor</div>
 <div class="a btn" style="left:98px;width:100px;top:38px;font-size:17px">BREMSEN</div>
 <div class="a btn" style="left:198px;width:100px;top:38px;font-size:17px">LÖSEN</div>
 <div class="rv" style="top:0;border-bottom:3px solid #6a6a6a"><i style="width:178px"></i><b>Bremskraft</b><u style="right:34px">90 N</u></div>
 <div class="rv" style="top:50%"><i style="width:283px"></i><b>Geschw.</b><u style="right:12px">2,05 m/s</u></div>
</div>
<div class="rp" style="top:817px;height:101px">
 <div class="rc" style="left:98px"></div><div class="rc" style="left:297px"></div>
 <div class="g" style="left:0;top:0;width:18px;height:18px;background:#ffff00;border-color:#888"></div>
 <svg class="a" style="left:22px;top:18px" width="58" height="58"><circle cx="28" cy="28" r="26" fill="none" stroke="#555" stroke-width="2"/><circle cx="28" cy="28" r="7" fill="none" stroke="#555" stroke-width="2"/><path d="M10 10 L23 23 M46 10 L33 23 M10 46 L23 33 M46 46 L33 33" stroke="#555" stroke-width="2"/></svg>
 <div class="lab">Bandmagazin</div>
 <div class="a btn" style="left:98px;width:200px;top:38px;font-size:17px">AUFFÜLLEN</div>
 <div class="rv" style="top:0;border-bottom:3px solid #6a6a6a"><i style="width:148px"></i><b>Bremsweg</b><u style="right:34px">50,0 m</u></div>
 <div class="rv" style="top:50%"><b>Wegzähler</b><u style="right:34px">985,3 m</u></div>
</div>
<div class="rp" style="top:924px;height:102px">
 <div class="rc" style="left:98px"></div><div class="rc" style="left:297px"></div>
 <div class="g" style="left:0;top:0;width:18px;height:18px"></div>
 <svg class="a" style="left:10px;top:34px" width="50" height="34"><rect x="2" y="2" width="4" height="28" fill="none" stroke="#555" stroke-width="1.6"/><path d="M6 16 H26 M26 8 V24 M19 10 L33 22 M33 10 L19 22 M18 16 H34" stroke="#555" stroke-width="1.8"/></svg>
 <div class="lab">Scanner</div>
 <div class="a btn" style="left:98px;width:200px;top:39px;font-size:17px">SCAN STARTEN</div>
 <div class="rv" style="top:0;border-bottom:3px solid #6a6a6a"><i style="width:28px"></i><b>Fortschritt</b><u style="right:12px">10 %</u></div>
 <div class="rv" style="top:50%"><i style="width:85px"></i><b>Sensorwert</b><u style="right:12px">203,7 mm</u></div>
</div>
<svg class="a" style="left:0;top:0;pointer-events:none" width="1920" height="1040"><g fill="#e8801a" stroke="#e8801a" stroke-width="3">
<path d="M1727 387 V433 M1721 387 H1733 L1727 398 Z M1721 433 H1733 L1727 422 Z"/>
<path d="M1691 437 V484 M1685 437 H1697 L1691 448 Z M1685 484 H1697 L1691 473 Z"/>
<path d="M1785 496 V542 M1779 496 H1791 L1785 507 Z M1779 542 H1791 L1785 531 Z"/>
<path d="M1785 712 V758 M1779 712 H1791 L1785 723 Z M1779 758 H1791 L1785 747 Z"/>
<path d="M1758 820 V866 M1752 820 H1764 L1758 831 Z M1752 866 H1764 L1758 855 Z"/>
</g></svg>
</body></html>
